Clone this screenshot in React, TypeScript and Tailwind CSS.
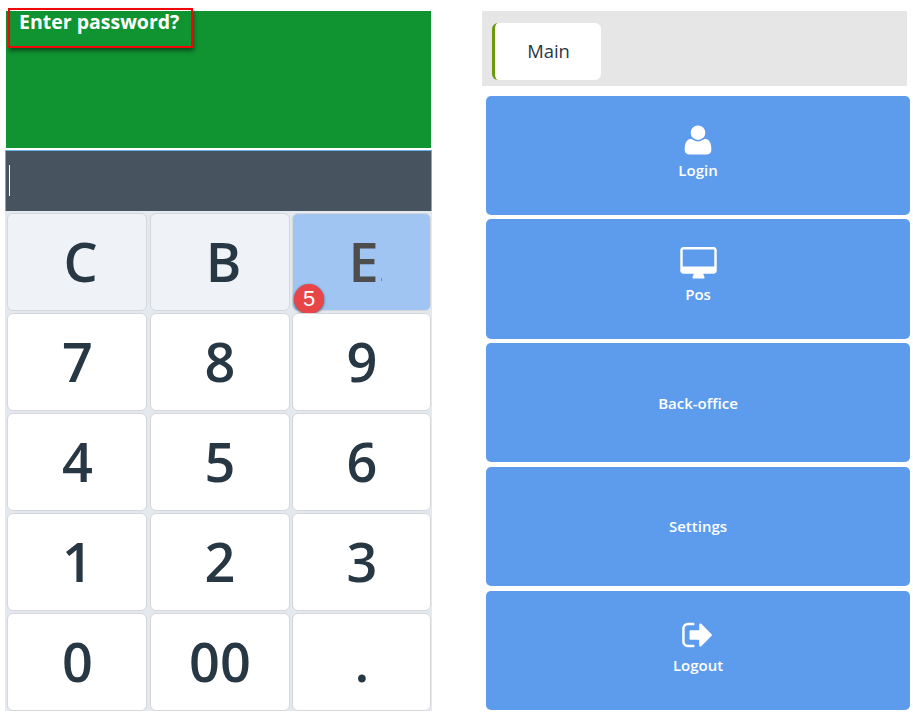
import React from 'react';

const USER =
  'M1600 1405q0 120-73 189.5t-194 69.5h-874q-121 0-194-69.5t-73-189.5q0-53 3.5-103.5t14-109 26.5-108.5 43-97.5 62-81 85.5-53.5 111.5-20q9 0 42 21.5t74.5 48 108 48 133.5 21.5 133.5-21.5 108-48 74.5-48 42-21.5q61 0 111.5 20t85.5 53.5 62 81 43 97.5 26.5 108.5 14 109 3.5 103.5zm-320-893q0 159-112.5 271.5t-271.5 112.5-271.5-112.5-112.5-271.5 112.5-271.5 271.5-112.5 271.5 112.5 112.5 271.5z';
const DESKTOP =
  'M1856 992v-832q0-13-9.5-22.5t-22.5-9.5h-1600q-13 0-22.5 9.5t-9.5 22.5v832q0 13 9.5 22.5t22.5 9.5h1600q13 0 22.5-9.5t9.5-22.5zm128-832v1088q0 66-47 113t-113 47h-544q0 37 16 77.5t32 71 16 43.5q0 26-19 45t-45 19h-512q-26 0-45-19t-19-45q0-14 16-44t32-70 16-78h-544q-66 0-113-47t-47-113v-1088q0-66 47-113t113-47h1600q66 0 113 47t47 113z';
const SIGN_OUT =
  'M704 1440q0 4 1 20t.5 26.5-3 23.5-10 19.5-20.5 6.5h-320q-119 0-203.5-84.5t-84.5-203.5v-704q0-119 84.5-203.5t203.5-84.5h320q13 0 22.5 9.5t9.5 22.5q0 4 1 20t.5 26.5-3 23.5-10 19.5-20.5 6.5h-320q-66 0-113 47t-47 113v704q0 66 47 113t113 47h312l11.5 1 11.5 3 8 5.5 7 9 2 13.5zm928-544q0 26-19 45l-544 544q-19 19-45 19t-45-19-19-45v-288h-448q-26 0-45-19t-19-45v-384q0-26 19-45t45-19h448v-288q0-26 19-45t45-19 45 19l544 544q19 19 19 45z';

function Icon({ d, box, className }: { d: string; box: string; className: string }) {
  return (
    <svg viewBox={box} className={className} fill="currentColor" aria-hidden="true">
      <path d={d} />
    </svg>
  );
}

const KEYS = ['C', 'B', 'E', '7', '8', '9', '4', '5', '6', '1', '2', '3', '0', '00', '.'];

function keyStyle(key: string) {
  if (key === 'E') return 'bg-[#a1c5f3] text-[#4d4d4d] pl-[4px]';
  if (key === 'C') return 'bg-[#eff3f7] text-[#283744] pl-[7px]';
  if (key === 'B') return 'bg-[#eff3f7] text-[#283744] pl-[8px]';
  return 'bg-white text-[#283744] pl-px';
}

function Keypad() {
  return (
    <section className="flex w-[427px] flex-col">
      <div className="ml-px h-[137px] w-[425px] bg-[#109331]">
        <div className="relative -top-[3px] left-[2px] h-[40px] w-[185px] border-2 border-[#f00808] pl-[9px] text-[19.5px] font-bold leading-[24px] text-white shadow-[1px_3px_4px_rgba(0,0,0,0.45)]">
          Enter password?
        </div>
      </div>
      <div className="mt-[2px] flex h-[61px] items-start border border-b-0 border-[#66afe9] bg-[#47535f] pl-[3px] pt-[14px]">
        <div className="h-[31px] w-px bg-white" />
      </div>
      <div className="grid h-[500px] grid-cols-[140px_140px_139px] gap-x-[2.5px] gap-y-[2px] bg-[#e4e9f0] pl-[2px] pt-[2px] [grid-template-rows:repeat(5,98px)]">
        {KEYS.map((key) => (
          <button
            key={key}
            className={`relative flex items-center justify-center rounded-[6px] border border-[#d5d7da] pb-[2px] text-[54px] font-semibold leading-none ${keyStyle(key)}`}
          >
            {key}
            {key === 'E' && (
              <>
                <span className="absolute left-[88px] top-[64px] h-[3px] w-px bg-[#6d87a8]" />
                <span className="absolute left-[1px] top-[70px] flex h-[30px] w-[30px] items-center justify-center rounded-full bg-[#e84548] font-['Liberation_Sans',sans-serif] text-[22px] font-normal text-white shadow-[0_1px_3px_rgba(0,0,0,0.6)]">
                  5
                </span>
              </>
            )}
          </button>
        ))}
      </div>
    </section>
  );
}

const TILE =
  'flex w-full shrink-0 flex-col items-center rounded-[5px] bg-[#5d9cec] text-[15px] font-semibold leading-[20px] text-white';

function Menu() {
  return (
    <section className="ml-[50px] flex w-[428px] flex-col">
      <div className="h-[75px] w-[425px] bg-[#e6e6e6] pl-[10px] pt-[12px]">
        <div className="flex h-[57px] w-[109px] items-center justify-center rounded-[6px] border-l-[3px] border-[#6b9a0c] bg-white pb-[2px] pl-px text-[18.4px] text-[#283744]">
          Main
        </div>
      </div>
      <nav className="ml-[4px] mt-[10px] flex w-[424px] flex-col">
        <button className={`${TILE} h-[119px] pt-[27px]`}>
          <Icon d={USER} box="0 0 1792 1792" className="h-[34px] w-[34px]" />
          <span className="mt-[3px]">Login</span>
        </button>
        <button className={`${TILE} mt-[4px] h-[120px] pt-[28px]`}>
          <Icon d={DESKTOP} box="0 0 2048 1792" className="h-[34px] w-[39px]" />
          <span className="mt-[3px]">Pos</span>
        </button>
        <button className={`${TILE} mt-[4px] h-[119px] justify-center`}>
          <span>Back-office</span>
        </button>
        <button className={`${TILE} mt-[5px] h-[119px] justify-center pb-[2px]`}>
          <span>Settings</span>
        </button>
        <button className={`${TILE} mt-[5px] h-[119px] pt-[27px]`}>
          <Icon d={SIGN_OUT} box="0 0 1792 1792" className="h-[34px] w-[34px]" />
          <span className="mt-[3px]">Logout</span>
        </button>
      </nav>
    </section>
  );
}

export default function App() {
  return (
    <main className="flex h-[715px] w-[913px] overflow-hidden bg-white pl-[5px] pt-[11px] font-['Open_Sans','Noto_Sans',sans-serif]">
      <Keypad />
      <Menu />
    </main>
  );
}
